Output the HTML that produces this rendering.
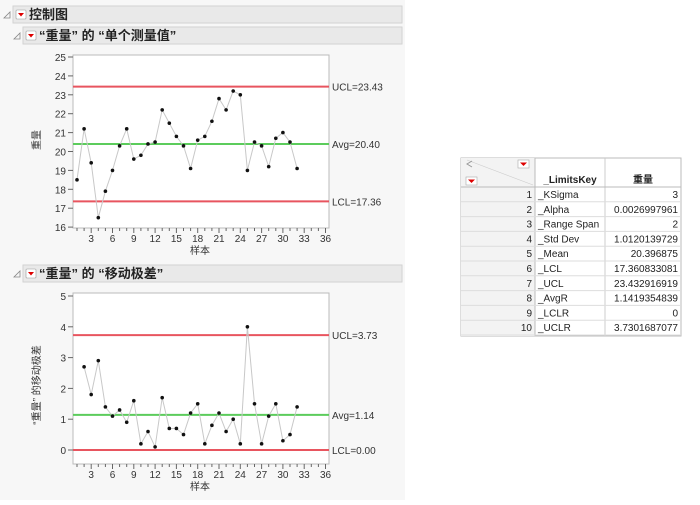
<!DOCTYPE html>
<html><head><meta charset="utf-8"><style>
body{margin:0;width:700px;height:500px;background:#fff;overflow:hidden;font-family:"Liberation Sans","Noto Sans CJK SC",sans-serif;}
</style></head><body>
<svg id="s" width="700" height="500" xmlns="http://www.w3.org/2000/svg" font-family="Liberation Sans, Noto Sans CJK SC, sans-serif">
<rect x="0" y="0" width="405" height="500" fill="#f7f7f7"/>
<g id="hdr"></g>
<g id="c1"></g><g id="c2"></g><g id="tb"></g>
</svg>
<script>
const NS="http://www.w3.org/2000/svg";
function el(p,t,a,txt){const e=document.createElementNS(NS,t);for(const k in a)e.setAttribute(k,a[k]);if(txt!==undefined)e.textContent=txt;document.getElementById(p).appendChild(e);return e;}
function header(x,y,w,text,bold){
 el('hdr','rect',{x:x,y:y,width:w,height:17,fill:'#e9e9e9',stroke:'#d2d2d2'});
 el('hdr','path',{d:`M${x-9} ${y+12} L${x-3} ${y+12} L${x-3} ${y+6} Z`,fill:'none',stroke:'#888','stroke-width':0.8});
 el('hdr','rect',{x:x+3,y:y+4,width:10,height:9,fill:'#fff',stroke:'#999','stroke-width':0.6,rx:1});
 el('hdr','path',{d:`M${x+5} ${y+7} L${x+11} ${y+7} L${x+8} ${y+10.5} Z`,fill:'#d00'});
 el('hdr','text',{x:x+16,y:y+13,'font-size':13,'font-weight':'bold',fill:'#222'},text);
}
header(13,6,389,'控制图');
header(23,27,379,'“重量” 的 “单个测量值”');
header(23,265,379,'“重量” 的 “移动极差”');
const X=i=>77+(i-1)*7.1;
function chart(g,top,bot,vmax,vmin,ppu,y0,labels,lines,data,start,ylab,ylabY){
 const Y=v=>y0+(vmax-v)*ppu;
 el(g,'rect',{x:73,y:top,width:256,height:bot-top,fill:'#fff',stroke:'#bbb'});
 for(let v=vmin;v<=vmax;v++){el(g,'line',{x1:68,x2:73,y1:Y(v),y2:Y(v),stroke:'#666'});
  el(g,'text',{x:66,y:Y(v)+4,'font-size':10,'text-anchor':'end',fill:'#333'},v);}
 for(let i=1;i<=36;i++){const big=i%3==0;el(g,'line',{x1:X(i),x2:X(i),y1:bot,y2:bot+(big?5:3),stroke:'#666'});
  if(big)el(g,'text',{x:X(i),y:bot+14,'font-size':10,'text-anchor':'middle',fill:'#333'},i);}
 el(g,'text',{x:200,y:bot+26,'font-size':10,'text-anchor':'middle',fill:'#333'},'样本');
 for(const [v,c,t] of lines){el(g,'line',{x1:73,x2:329,y1:Y(v),y2:Y(v),stroke:c,'stroke-width':2});
  el(g,'text',{x:332,y:Y(v)+4,'font-size':10,fill:'#333'},t);}
 let d='';data.forEach((v,k)=>{d+=(k?'L':'M')+X(k+start)+' '+Y(v)+' ';});
 el(g,'path',{d:d,fill:'none',stroke:'#c8c8c8','stroke-width':1});
 data.forEach((v,k)=>el(g,'circle',{cx:X(k+start),cy:Y(v),r:1.8,fill:'#111'}));
 el(g,'text',{x:0,y:0,'font-size':10,'text-anchor':'middle',fill:'#333',transform:`translate(40 ${ylabY}) rotate(-90)`},ylab);
}
const d1=[18.5,21.2,19.4,16.5,17.9,19.0,20.3,21.2,19.6,19.8,20.4,20.5,22.2,21.5,20.8,20.3,19.1,20.6,20.8,21.6,22.8,22.2,23.2,23.0,19.0,20.5,20.3,19.2,20.7,21.0,20.5,19.1];
chart('c1',55,228,25,16,18.9,57,null,[[23.43,'#e8555f','UCL=23.43'],[20.40,'#5ccc5c','Avg=20.40'],[17.36,'#e8555f','LCL=17.36']],d1,1,'重量',140);
const d2=[2.7,1.8,2.9,1.4,1.1,1.3,0.9,1.6,0.2,0.6,0.1,1.7,0.7,0.7,0.5,1.2,1.5,0.2,0.8,1.2,0.6,1.0,0.2,4.0,1.5,0.2,1.1,1.5,0.3,0.5,1.4];
chart('c2',293,464,5,0,30.8,296,null,[[3.73,'#e8555f','UCL=3.73'],[1.14,'#5ccc5c','Avg=1.14'],[0.0,'#e8555f','LCL=0.00']],d2,2,'“重量” 的移动极差',385);
// table
const T='tb';
el(T,'rect',{x:461,y:158,width:220,height:178,fill:'#fff',stroke:'#bbb'});
el(T,'rect',{x:461,y:158,width:74,height:178,fill:'#f3f3f3'});
el(T,'line',{x1:467,y1:160,x2:533,y2:185,stroke:'#ccc','stroke-width':0.6});
el(T,'path',{d:'M472 161 L467 164 L472 167',fill:'none',stroke:'#999'});
el(T,'rect',{x:518,y:160,width:11,height:8,fill:'#fff',stroke:'#aaa','stroke-width':0.6});
el(T,'path',{d:'M520 162.5 L527 162.5 L523.5 166 Z',fill:'#d00'});
el(T,'rect',{x:466,y:177,width:11,height:8,fill:'#fff',stroke:'#aaa','stroke-width':0.6});
el(T,'path',{d:'M468 179.5 L475 179.5 L471.5 183 Z',fill:'#d00'});
el(T,'line',{x1:535,y1:158,x2:535,y2:336,stroke:'#bbb'});
el(T,'line',{x1:605,y1:158,x2:605,y2:336,stroke:'#ccc'});
el(T,'line',{x1:461,y1:187,x2:681,y2:187,stroke:'#bbb'});
el(T,'text',{x:570,y:183,'font-size':10,'font-weight':'bold','text-anchor':'middle',fill:'#222'},'_LimitsKey');
el(T,'text',{x:643,y:183,'font-size':10,'font-weight':'bold','text-anchor':'middle',fill:'#222'},'重量');
const rows=[['_KSigma','3'],['_Alpha','0.0026997961'],['_Range Span','2'],['_Std Dev','1.0120139729'],['_Mean','20.396875'],['_LCL','17.360833081'],['_UCL','23.432916919'],['_AvgR','1.1419354839'],['_LCLR','0'],['_UCLR','3.7301687077']];
rows.forEach((r,i)=>{const y=187+i*14.8;
 el(T,'line',{x1:461,y1:y+14.8,x2:681,y2:y+14.8,stroke:'#ddd'});
 el(T,'text',{x:532,y:y+11,'font-size':10,'text-anchor':'end',fill:'#222'},i+1);
 el(T,'text',{x:538,y:y+11,'font-size':10,fill:'#222'},r[0]);
 el(T,'text',{x:678,y:y+11,'font-size':10,'text-anchor':'end',fill:'#222'},r[1]);});
</script>
</body></html>
